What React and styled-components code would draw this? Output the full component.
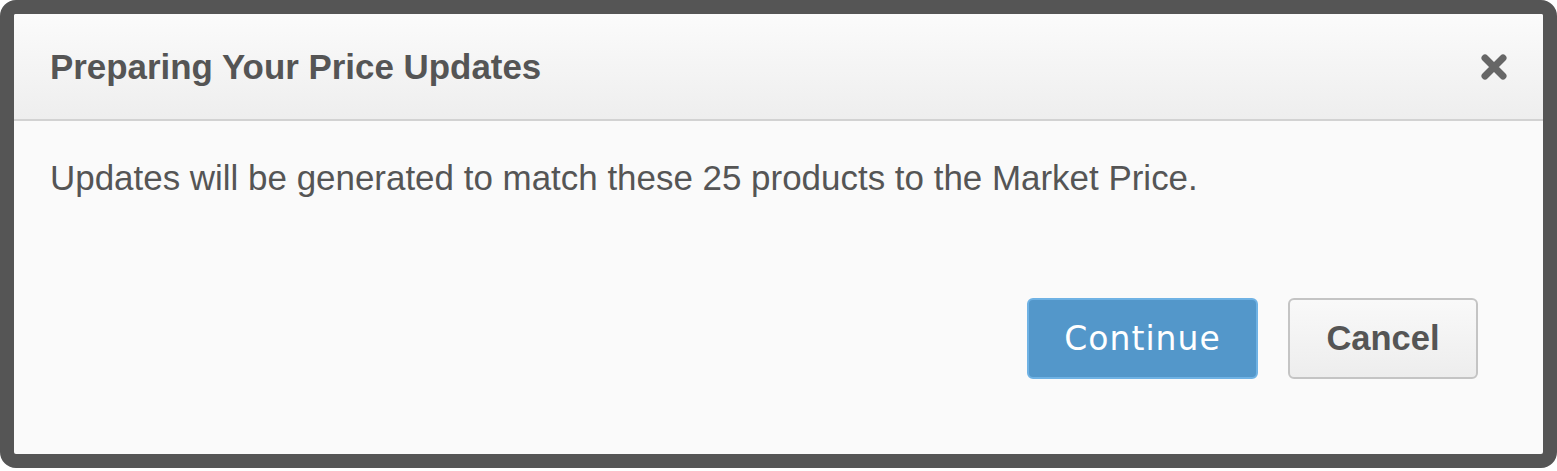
import React from "react";
import styled, { createGlobalStyle } from "styled-components";

const Global = createGlobalStyle`
  html, body { margin: 0; padding: 0; background: #ffffff; }
  body { font-family: "Liberation Sans", Arial, sans-serif; }
`;

const Frame = styled.div`
  box-sizing: border-box;
  width: 1557px;
  height: 468px;
  border: 14px solid #555555;
  border-radius: 16px;
  background: #fafafa;
  display: flex;
  flex-direction: column;
  overflow: hidden;
`;

const Header = styled.div`
  box-sizing: border-box;
  height: 107px;
  padding: 0 34px 0 36px;
  display: flex;
  align-items: center;
  justify-content: space-between;
  background: linear-gradient(to bottom, #fbfbfb 0%, #eeeeee 100%);
  border-bottom: 2px solid #d2d2d2;
`;

const Title = styled.h2`
  margin: 0;
  font-family: "Liberation Sans", Arial, sans-serif;
  font-weight: bold;
  font-size: 34.9px;
  color: #555555;
`;

const Close = styled.button`
  border: 0;
  background: none;
  padding: 0;
  width: 30px;
  height: 30px;
  display: flex;
  align-items: center;
  justify-content: center;
  cursor: pointer;
`;

const Body = styled.div`
  flex: 1;
  display: flex;
  flex-direction: column;
  padding: 36px 65px 75px 36px;
`;

const Message = styled.p`
  margin: 0;
  font-size: 34.95px;
  color: #555555;
  line-height: 1.2;
`;

const Actions = styled.div`
  margin-top: auto;
  display: flex;
  justify-content: flex-end;
  gap: 30px;
`;

const Button = styled.button`
  box-sizing: border-box;
  height: 81px;
  width: ${(p) => p.$w}px;
  border-radius: 6px;
  cursor: pointer;
  border: 2px solid ${(p) => (p.$primary ? "#6fb2e4" : "#c4c4c4")};
  background: ${(p) =>
    p.$primary ? "#5397ca" : "linear-gradient(to bottom, #f9f9f9, #ededed)"};
  color: ${(p) => (p.$primary ? "#ffffff" : "#555555")};
  font-family: ${(p) =>
    p.$primary ? '"DejaVu Sans", Verdana, sans-serif' : '"Liberation Sans", Arial, sans-serif'};
  font-weight: ${(p) => (p.$primary ? "normal" : "bold")};
  font-size: ${(p) => (p.$primary ? "33px" : "34.5px")};
  letter-spacing: ${(p) => (p.$primary ? "1px" : "0")};
  padding: 0;
`;

export default function App() {
  return (
    <>
      <Global />
      <Frame>
        <Header>
          <Title>Preparing Your Price Updates</Title>
          <Close aria-label="Close">
            <svg width="28" height="28" viewBox="0 0 28 28">
              <path
                d="M5 5 L23 23 M23 5 L5 23"
                stroke="#666666"
                strokeWidth="7"
                strokeLinecap="round"
              />
            </svg>
          </Close>
        </Header>
        <Body>
          <Message>
            Updates will be generated to match these 25 products to the Market Price.
          </Message>
          <Actions>
            <Button $primary $w={231}>Continue</Button>
            <Button $w={190}>Cancel</Button>
          </Actions>
        </Body>
      </Frame>
    </>
  );
}
